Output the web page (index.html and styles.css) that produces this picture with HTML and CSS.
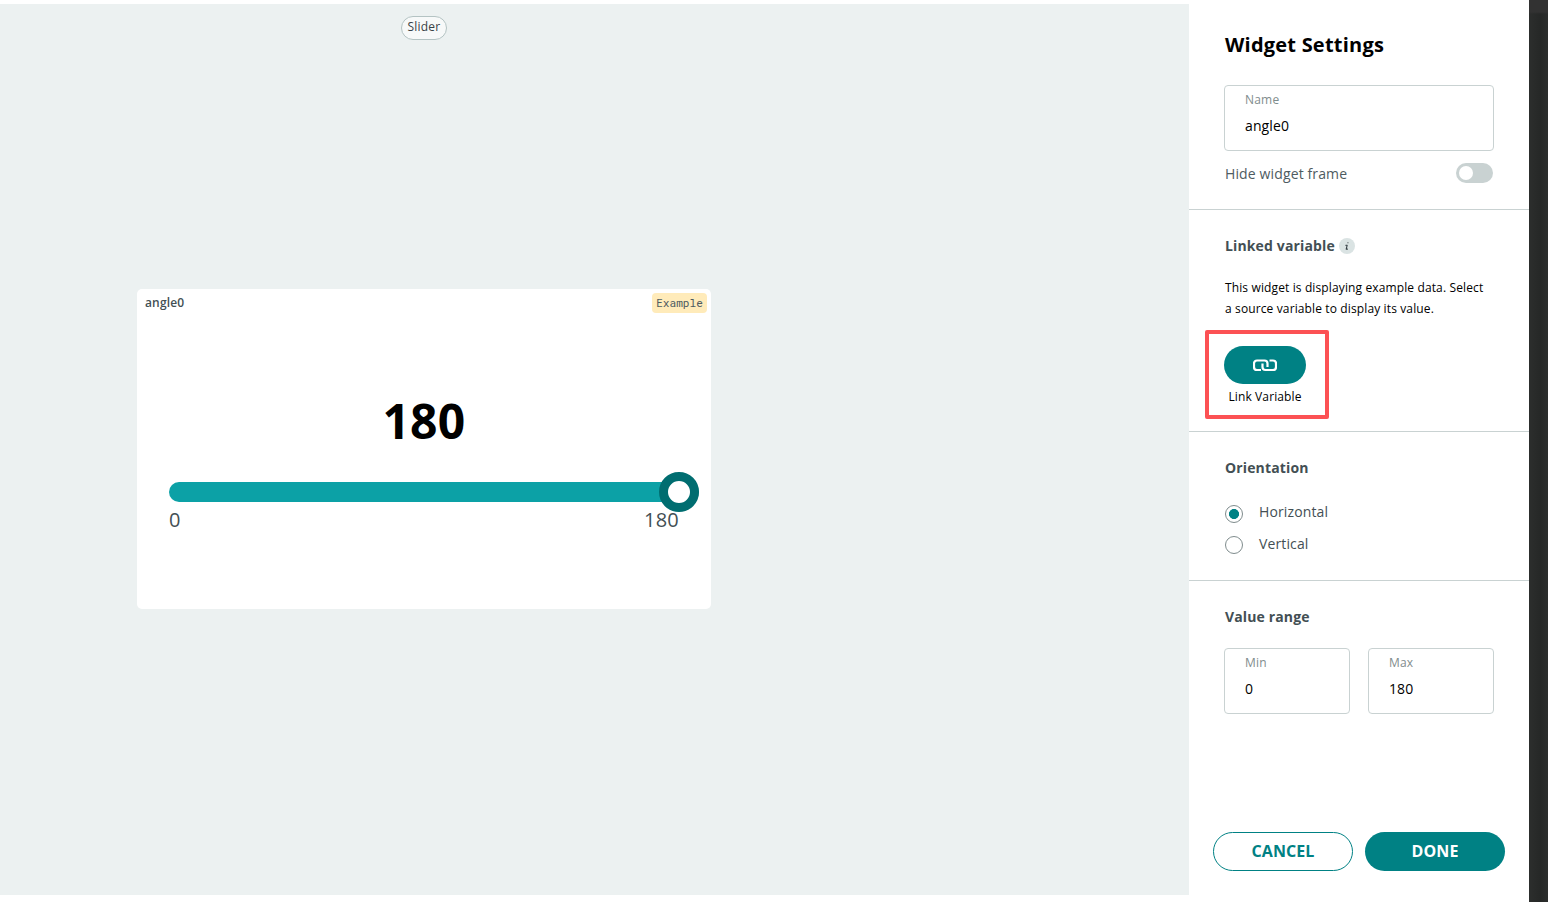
FILE: index.html
```html
<!DOCTYPE html>
<html lang="en">
<head>
<meta charset="utf-8">
<title>Widget Settings</title>
<link rel="stylesheet" href="styles.css">
</head>
<body>
<div class="app">
  <main class="canvas">
    <span class="chip">Slider</span>
    <section class="widget">
      <header class="widget-head"><span class="widget-name">angle0</span><span class="badge">Example</span></header>
      <div class="value">180</div>
      <div class="track"><span class="thumb"></span></div>
      <div class="limits"><span>0</span><span>180</span></div>
    </section>
  </main>
  <aside class="panel">
    <section class="section general">
      <h1 class="title">Widget Settings</h1>
      <label class="field"><span class="field-label">Name</span><span class="field-value">angle0</span></label>
      <div class="toggle-row"><span>Hide widget frame</span><span class="toggle"><span class="knob"></span></span></div>
    </section>
    <section class="section linked">
      <h2 class="heading">Linked variable
        <svg class="info" width="16" height="16" viewBox="0 0 16 16"><circle cx="8" cy="8" r="8" fill="#dae3e3"/><path d="M8.900 4.700h.1M6.800 7.200h1.400l-1 3.900h1.300" fill="none" stroke="#374146" stroke-width="1.100" stroke-linecap="round" stroke-linejoin="round"/></svg>
      </h2>
      <p class="hint">This widget is displaying example data. Select a source variable to display its value.</p>
      <div class="highlight">
        <button class="link-button"><svg width="24" height="13" viewBox="0 0 24 13" fill="none" stroke="#fff" stroke-width="2.200"><path d="M8 11H4a3 3 0 0 1-3-3V4.500a3 3 0 0 1 3-3h7.500a3 3 0 0 1 3 3V8"/><path d="M16.500 1.500H20a3 3 0 0 1 3 3V8a3 3 0 0 1-3 3h-7.500a3 3 0 0 1-3-3V4.500"/></svg></button>
        <span class="link-caption">Link Variable</span>
      </div>
    </section>
    <section class="section orientation">
      <h2 class="heading">Orientation</h2>
      <div class="radio-row"><span class="radio checked"></span><span class="radio-label">Horizontal</span></div>
      <div class="radio-row second"><span class="radio"></span><span class="radio-label">Vertical</span></div>
    </section>
    <section class="section range">
      <h2 class="heading">Value range</h2>
      <div class="range-fields">
        <label class="field"><span class="field-label">Min</span><span class="field-value">0</span></label>
        <label class="field"><span class="field-label">Max</span><span class="field-value">180</span></label>
      </div>
    </section>
    <footer class="actions"><button class="btn cancel">CANCEL</button><button class="btn done">DONE</button></footer>
  </aside>
  <div class="backdrop"></div>
</div>
</body>
</html>
```
FILE: styles.css
```css
* { box-sizing: border-box; }
body { margin: 0; font-family: "Open Sans", sans-serif; background: #fff; color: #000; overflow: hidden; }
h1, h2, p { margin: 0; }
button { font-family: inherit; margin: 0; padding: 0; border: 0; }
.app { display: flex; width: 1548px; height: 902px; }

.canvas { width: 1189px; height: 891px; margin-top: 4px; padding-top: 12px; background: #ecf1f1; }
.chip { display: block; width: 46px; height: 24px; margin-left: 401px; border: 1px solid #b4c3c3; border-radius: 12px; background: #f7f9f9; color: #374146; font-size: 12px; line-height: 20px; letter-spacing: .2px; text-align: center; }
.widget { width: 574px; height: 320px; margin: 249px 0 0 137px; background: #fff; border-radius: 5px; }
.widget-head { display: flex; justify-content: space-between; height: 24px; padding: 4px 4px 0 8px; }
.widget-name { font-size: 12px; font-weight: 600; line-height: 20px; letter-spacing: .15px; color: #434f54; }
.badge { width: 55px; height: 20px; border-radius: 4px; background: #ffebba; color: #4e5b61; font-family: "Roboto Mono", "DejaVu Sans Mono", monospace; font-size: 11.1px; line-height: 20px; text-align: center; }
.value { margin-top: 76px; font-size: 48px; font-weight: 700; line-height: 64px; letter-spacing: .3px; text-align: center; }
.track { display: flex; justify-content: flex-end; align-items: center; width: 530px; height: 20px; margin: 29px 0 0 32px; border-radius: 10px; background: #0ca1a6; }
.thumb { width: 40px; height: 40px; border: 9px solid #006d70; border-radius: 50%; background: #fff; }
.limits { display: flex; justify-content: space-between; width: 510px; margin: 4px 0 0 32px; font-size: 20px; line-height: 28px; letter-spacing: .2px; color: #434f54; }

.panel { display: flex; flex-direction: column; width: 340px; height: 902px; background: #fff; }
.section { padding: 0 35px 0 36px; border-bottom: 1px solid #c9d2d2; }
.general { height: 210px; padding-top: 30px; }
.title { font-size: 20px; font-weight: 700; line-height: 30px; letter-spacing: .22px; }
.field { display: flex; flex-direction: column; height: 66px; border: 1px solid #c9d2d2; border-radius: 4px; padding: 6px 20px 0; }
.general .field { margin: 25px 0 0 -1px; }
.field-label { font-size: 12px; line-height: 16px; letter-spacing: .2px; color: #7f8c8d; }
.field-value { margin-top: 8px; font-size: 14px; line-height: 20px; letter-spacing: .12px; }
.toggle-row { display: flex; justify-content: space-between; margin-top: 12px; padding-right: 1px; font-size: 14px; line-height: 22px; letter-spacing: .13px; color: #4e5b61; }
.toggle { width: 37px; height: 20px; border-radius: 10px; background: #c9d2d2; padding: 3px; }
.knob { display: block; width: 14px; height: 14px; border-radius: 50%; background: #fff; }
.linked { height: 222px; padding-top: 26px; }
.heading { display: flex; align-items: center; gap: 4px; font-size: 14px; font-weight: 700; line-height: 20px; letter-spacing: .14px; color: #434f54; }
.hint { width: 264px; margin-top: 21px; font-size: 12px; line-height: 21px; letter-spacing: .125px; }
.highlight { display: flex; flex-direction: column; align-items: center; width: 124px; height: 89px; margin: 11px 0 0 -20px; padding: 12px 4px 0 0; border: 4px solid #fc5154; border-radius: 2px; }
.link-button { display: flex; align-items: center; justify-content: center; width: 82px; height: 38px; border-radius: 19px; background: #008184; }
.link-caption { margin-top: 3px; font-size: 12px; line-height: 20px; letter-spacing: .12px; }
.orientation { height: 149px; padding-top: 26px; }
.radio-row { display: flex; height: 18px; margin-top: 27px; gap: 16px; }
.radio-row.second { margin-top: 13px; }
.radio { width: 18px; height: 18px; border: 1px solid #7f8c8d; border-radius: 50%; }
.radio.checked { background: radial-gradient(circle, #008184 4.700px, #fff 5.300px); }
.radio-label { font-size: 14px; line-height: 14px; letter-spacing: .13px; color: #434f54; }
.second .radio-label { line-height: 16px; }
.range { height: 251px; padding-top: 26px; border: 0; }
.range-fields { display: grid; grid-template-columns: 126px 126px; gap: 18px; margin: 21px 0 0 -1px; }
.actions { display: flex; gap: 12px; padding-left: 24px; }
.btn { width: 140px; height: 39px; border-radius: 20px; font-size: 16px; font-weight: 700; line-height: 37px; letter-spacing: .1px; }
.cancel { border: 1px solid #008184; background: #fff; color: #008184; }
.done { background: #008184; color: #fff; }
.backdrop { width: 19px; height: 902px; background: linear-gradient(#323232 0 12px, transparent 14px), linear-gradient(90deg, #2c2e2d, #262827 60%, #2c2e2d); }
```
